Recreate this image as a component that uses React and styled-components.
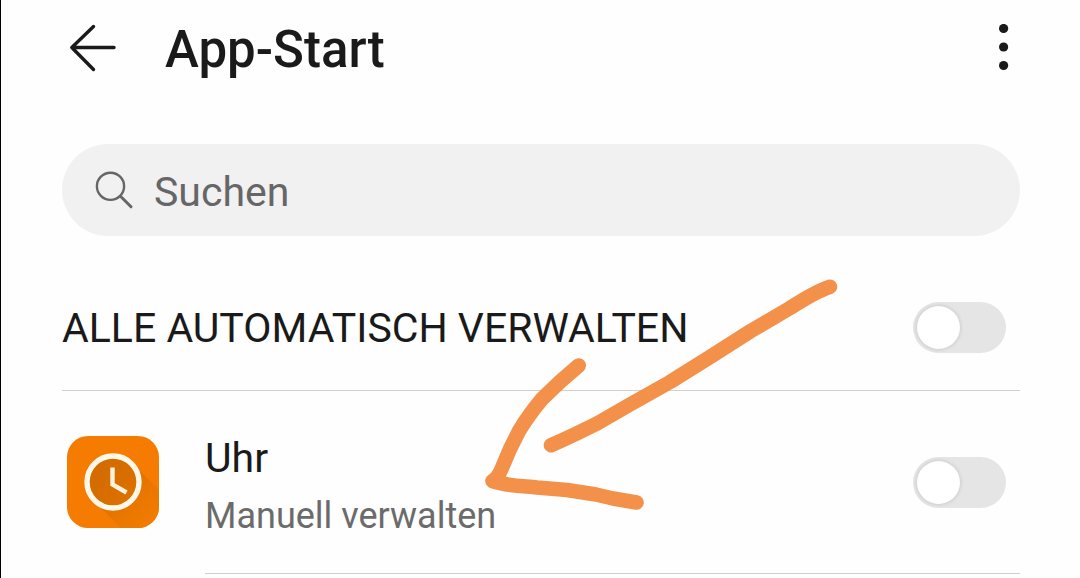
import React, { useState } from 'react'
import styled, { createGlobalStyle } from 'styled-components'

const GlobalStyle = createGlobalStyle`
    * {
        box-sizing: border-box;
    }

    body {
        margin: 0;
        background: #fefefe;
        color: #1a1a1a;
        font-family: Roboto, 'Liberation Sans', sans-serif;
    }
`

const Page = styled.div`
    position: relative;
    min-height: 100vh;
    padding: 0 60px 0 61px;
    border-left: 1px solid #000;
    overflow: hidden;
`

const Header = styled.header`
    display: flex;
    align-items: center;
    height: 96px;
    padding: 0 7px;
`

const IconButton = styled.button`
    display: flex;
    padding: 0;
    border: 0;
    background: none;
    color: inherit;
    cursor: pointer;
`

const Title = styled.h1`
    flex: 1;
    margin: 0;
    padding: 4px 0 0 48px;
    font-size: 51px;
    font-weight: 500;
    line-height: 60px;
`

const SearchBar = styled.label`
    display: flex;
    align-items: center;
    gap: 20px;
    height: 92px;
    margin: 48px 0 28px;
    padding: 0 32px;
    border-radius: 46px;
    background: #f1f1f1;
    color: #666;
`

const SearchInput = styled.input`
    flex: 1;
    min-width: 0;
    height: 60px;
    padding: 4px 0 0;
    border: 0;
    outline: 0;
    background: none;
    color: #1a1a1a;
    font-family: inherit;
    font-size: 41px;

    &::placeholder {
        color: #666;
        opacity: 1;
    }
`

const AllRow = styled.div`
    display: flex;
    align-items: center;
    justify-content: space-between;
    height: 127px;
    padding-right: 14px;
    border-bottom: 1px solid #d0d0d0;
`

const AppRow = styled.div`
    display: flex;
    gap: 46px;
    padding-left: 5px;
`

const AppIcon = styled.svg`
    flex: none;
    margin-top: 45px;
`

const AppContent = styled.div`
    display: flex;
    flex: 1;
    align-items: center;
    justify-content: space-between;
    height: 183px;
    padding-right: 14px;
    border-bottom: 1px solid #d0d0d0;
`

const Label = styled.label`
    padding-top: 2px;
    font-size: 41px;
    line-height: 56px;
`

const AppLabel = styled(Label)`
    padding-top: 11px;
`

const SubLabel = styled.span`
    display: block;
    color: #6b6b6b;
    font-size: 36px;
    line-height: 60px;
`

const Switch = styled.input`
    display: flex;
    flex: none;
    appearance: none;
    width: 93px;
    height: 51px;
    margin: 0;
    padding: 4px;
    border-radius: 26px;
    background: ${({ checked }) => (checked ? '#f57c00' : '#e5e5e5')};
    cursor: pointer;

    &::before {
        content: '';
        width: 43px;
        height: 43px;
        margin-left: ${({ checked }) => (checked ? '42px' : '0')};
        border-radius: 50%;
        background: #fff;
        box-shadow: 0 0 4px rgba(0, 0, 0, 0.16);
    }
`

const Marker = styled.svg`
    position: absolute;
    top: 270px;
    left: 469px;
    pointer-events: none;
`

const BackIcon = () => (
    <svg
        width="48"
        height="48"
        viewBox="0 0 48 48"
        fill="none"
        stroke="currentColor"
        strokeWidth="3.4"
        strokeLinecap="round"
        strokeLinejoin="round"
    >
        <path d="M24.5 2.5 2.8 23.5 24.5 45.5M2.8 23.5H45" />
    </svg>
)

const MoreIcon = () => (
    <svg width="18" height="48" viewBox="0 0 18 48" fill="currentColor">
        <circle cx="8.6" cy="4.5" r="4.6" />
        <circle cx="8.6" cy="23" r="4.6" />
        <circle cx="8.6" cy="41.5" r="4.6" />
    </svg>
)

const SearchIcon = () => (
    <svg
        width="40"
        height="40"
        viewBox="0 0 40 40"
        fill="none"
        stroke="currentColor"
        strokeLinecap="round"
    >
        <circle cx="16.5" cy="16.3" r="13.6" strokeWidth="2.4" />
        <path d="M26.5 26.3 37 36.8" strokeWidth="3" />
    </svg>
)

const ClockIcon = () => (
    <AppIcon width="92" height="92" viewBox="0 0 92 92">
        <defs>
            <linearGradient id="shade" x1="0" y1="0" x2="1" y2="1">
                <stop offset="0.2" stopColor="#dc7000" />
                <stop offset="0.7" stopColor="#f27b00" />
            </linearGradient>
            <linearGradient id="face" x1="0" y1="0" x2="1" y2="1">
                <stop offset="0" stopColor="#cf6900" />
                <stop offset="1" stopColor="#e07200" />
            </linearGradient>
            <clipPath id="tile">
                <rect width="92" height="92" rx="21" />
            </clipPath>
        </defs>
        <g clipPath="url(#tile)">
            <rect width="92" height="92" fill="#f57c00" />
            <path d="M66 28 108 70 70 108 28 66z" fill="url(#shade)" />
        </g>
        <circle
            cx="46"
            cy="46"
            r="26"
            fill="url(#face)"
            stroke="#fff8e8"
            strokeWidth="5.4"
        />
        <path
            d="M45.5 31.5V48.5L59.5 56.5"
            fill="none"
            stroke="#fff3dc"
            strokeWidth="4.4"
        />
    </AppIcon>
)

const HandDrawnArrow = () => (
    <Marker
        width="380"
        height="250"
        viewBox="0 0 380 250"
        fill="none"
        stroke="#f3914a"
        strokeWidth="14.6"
        strokeLinecap="round"
        strokeLinejoin="round"
    >
        <path d="M360 16.7C347 21 334 29 320 38L280 61.5 240 87 200 112 160 134.5 127 153.5C110 162 98 168 81 175.2" />
        <path d="M108.7 95.5C96 106 84 117 72 129 62 141 55 151 49 161L40 179 31.5 199C29 205 26 209 22.5 211 37 216 53 216 67 217.5L97 220 126 224.5 143 228.5 166.5 232.5" />
    </Marker>
)

const App = () => {
    const [all, setAll] = useState(false)
    const [clock, setClock] = useState(false)

    return (
        <Page>
            <GlobalStyle />
            <Header>
                <IconButton aria-label="Zurück">
                    <BackIcon />
                </IconButton>
                <Title>App-Start</Title>
                <IconButton aria-label="Weitere Optionen">
                    <MoreIcon />
                </IconButton>
            </Header>
            <main>
                <SearchBar>
                    <SearchIcon />
                    <SearchInput
                        type="search"
                        placeholder="Suchen"
                        aria-label="Suchen"
                    />
                </SearchBar>
                <AllRow>
                    <Label htmlFor="all">ALLE AUTOMATISCH VERWALTEN</Label>
                    <Switch
                        id="all"
                        type="checkbox"
                        role="switch"
                        checked={all}
                        onChange={() => setAll(!all)}
                    />
                </AllRow>
                <AppRow>
                    <ClockIcon />
                    <AppContent>
                        <AppLabel htmlFor="clock">
                            Uhr
                            <SubLabel>Manuell verwalten</SubLabel>
                        </AppLabel>
                        <Switch
                            id="clock"
                            type="checkbox"
                            role="switch"
                            checked={clock}
                            onChange={() => setClock(!clock)}
                        />
                    </AppContent>
                </AppRow>
            </main>
            <HandDrawnArrow />
        </Page>
    )
}

export default App
